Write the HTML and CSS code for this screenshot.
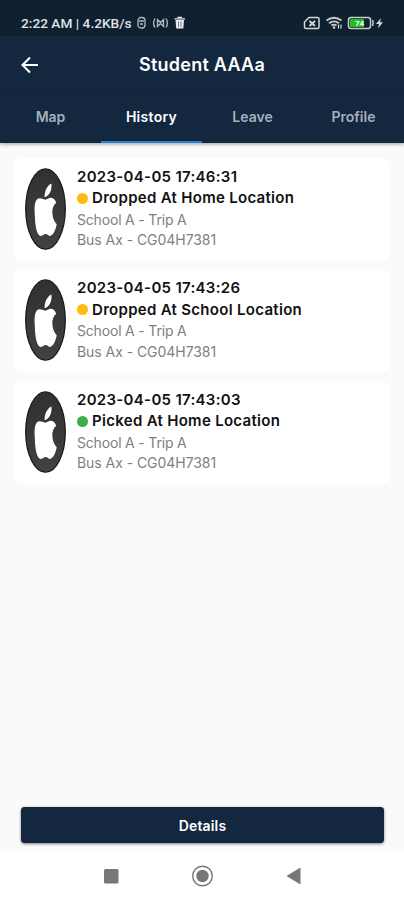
FILE: index.html
```html
<!DOCTYPE html>
<html lang="en">
<head>
  <meta charset="UTF-8" />
  <meta name="viewport" content="width=device-width, initial-scale=1" />
  <title>Student AAAa</title>
  <link rel="stylesheet" href="styles.css">
</head>
<body>
  <svg width="0" height="0" class="defs">
    <defs>
      <linearGradient id="dark" x1="0" y1="0" x2="0" y2="1">
        <stop offset="0" stop-color="#303032" />
        <stop offset="1" stop-color="#424244" />
      </linearGradient>
      <symbol id="avatar" viewBox="0 0 42 84">
        <ellipse cx="21" cy="42" rx="20.3" ry="41.2" fill="url(#dark)" stroke="#151515" stroke-width="1.2" />
        <path fill="#fff" d="M27 16C23 18 20 23 20 30C25 29 28 22.5 27 16Z" />
        <path fill="#fff" d="M20.800 32.500C18 31.500 15 30 13 31.500C10 34 9.500 39 10 47C10.300 56 11 65 14.500 69C17 71 19 67.500 21.200 67.500C23.400 67.500 25 71 27 69C30 67 31.500 62 32.500 57.500C29.800 55 28 50.500 28 45.500C28 40.500 29.300 38 32 35.500C30 30.500 26.500 30 24.500 31Z" />
      </symbol>
    </defs>
  </svg>

  <div class="status-bar">
    <span class="status-text">2:22 AM | 4.2KB/s</span>
    <svg class="status-left" width="48" height="14" viewBox="0 0 48 14" fill="none" stroke="#b5bac0" stroke-width="1.300">
      <rect x="1" y="1.500" width="7" height="10.500" rx="3" />
      <path d="M2 5H7M3 8H6" />
      <path d="M18 2.500C16.500 5 16.500 9 18 11.500M20.500 3.500V10.500L23.500 7.500L26.500 10.500V3.500L23.500 6.500ZM29 2.500C30.500 5 30.500 9 29 11.500" />
      <path d="M38.500 4H47L46.300 12.500H39.200Z" fill="#e8eaec" stroke="none" />
      <path d="M37.500 2.800H48M40.500 1.300H45" stroke="#e8eaec" />
      <path d="M41.500 5.500V11M44 5.500V11" stroke="#556270" stroke-width=".8" />
    </svg>
    <svg class="status-right" width="82" height="16" viewBox="0 0 82 16" fill="none">
      <path d="M6 2.500H14.500Q16 2.500 16 4V12Q16 13.500 14.500 13.500H3Q1.500 13.500 1.500 12V7Z" stroke="#d4d7da" stroke-width="1.500" />
      <path d="M6.500 6L12 11M12 6L6.500 11" stroke="#d4d7da" stroke-width="1.800" />
      <path d="M23.500 5.500Q31 0 38.500 5.500M26 8.200Q31 4.500 36 8.200M28.500 10.600Q31 8.800 33.500 10.600" stroke="#c8ccd0" stroke-width="1.800" />
      <circle cx="31" cy="12.500" r="1.300" fill="#c8ccd0" />
      <path d="M35.500 9.500V13.500M38 9.500V13.500" stroke="#dfe2e5" stroke-width="1.200" />
      <rect x="45.500" y="2.500" width="22" height="11" rx="2.500" stroke="#c8ccd0" stroke-width="1.500" />
      <path d="M69.500 5Q71 8 69.500 11" stroke="#c8ccd0" stroke-width="1.500" />
      <rect x="47" y="4" width="14" height="8" rx="1" fill="#1fc01c" />
      <text x="52" y="11" class="battery">74</text>
      <path d="M78 3L73 9H76L75 13.500L80 7.300H77Z" fill="#d4d7da" />
    </svg>
  </div>

  <header class="app-bar">
    <svg class="back" width="18" height="18" viewBox="0 0 18 18" fill="none" stroke="#fff" stroke-width="2.100">
      <path d="M17 9H2M9 1.500L1.500 9L9 16.500" />
    </svg>
    <h1>Student AAAa</h1>
  </header>
  <nav class="tabs">
    <a class="tab">Map</a>
    <a class="tab active">History</a>
    <a class="tab">Leave</a>
    <a class="tab">Profile</a>
  </nav>

  <main>
    <div class="card">
      <svg class="avatar"><use href="#avatar" /></svg>
      <div class="info">
        <div class="date">2023-04-05 17:46:31</div>
        <div class="event"><i class="dot"></i><span>Dropped At Home Location</span></div>
        <div class="trip">School A - Trip A</div>
        <div class="bus">Bus Ax - CG04H7381</div>
      </div>
    </div>
    <div class="card">
      <svg class="avatar"><use href="#avatar" /></svg>
      <div class="info">
        <div class="date">2023-04-05 17:43:26</div>
        <div class="event"><i class="dot"></i><span>Dropped At School Location</span></div>
        <div class="trip">School A - Trip A</div>
        <div class="bus">Bus Ax - CG04H7381</div>
      </div>
    </div>
    <div class="card">
      <svg class="avatar"><use href="#avatar" /></svg>
      <div class="info">
        <div class="date">2023-04-05 17:43:03</div>
        <div class="event"><i class="dot picked"></i><span>Picked At Home Location</span></div>
        <div class="trip">School A - Trip A</div>
        <div class="bus">Bus Ax - CG04H7381</div>
      </div>
    </div>
  </main>

  <button class="details">Details</button>

  <div class="nav-bar">
    <svg width="404" height="48" viewBox="0 0 404 48">
      <rect x="104" y="17" width="14.500" height="14.500" rx="1.500" fill="#777" />
      <circle cx="202.500" cy="24" r="9.800" fill="none" stroke="#777" stroke-width="1.400" />
      <circle cx="202.500" cy="24" r="6.200" fill="#777" />
      <path d="M286.500 24L300.500 15.500V32.500Z" fill="#777" />
    </svg>
  </div>
</body>
</html>
```
FILE: styles.css
```css
* {
  box-sizing: border-box;
}
body {
  margin: 0;
  height: 900px;
  display: flex;
  flex-direction: column;
  overflow: hidden;
  background: #fafafa;
  font-family: Inter, Roboto, sans-serif;
}
.defs {
  position: absolute;
}
.status-bar {
  height: 36px;
  padding: 10px 19px 0 21px;
  display: flex;
  align-items: center;
  background: #0f2031;
}
.status-text {
  font: 500 13.7px Roboto, sans-serif;
  color: #dfe2e5;
  white-space: nowrap;
  width: 116px;
}
.status-right {
  margin-left: auto;
}
.battery {
  font: 700 8px Roboto, sans-serif;
  fill: #fff;
}
.app-bar {
  height: 56px;
  padding: 1px 21px 0;
  display: grid;
  grid-template-columns: 18px 1fr 18px;
  align-items: center;
  background: #13283f;
}
h1 {
  margin: 0;
  text-align: center;
  color: #fff;
  font-size: 18px;
  font-weight: 600;
  letter-spacing: 0.25px;
  line-height: 24px;
}
.tabs {
  height: 50.5px;
  display: grid;
  grid-template-columns: repeat(4, 1fr);
  background: #13283f;
  box-shadow: 0 1px 4px rgba(0, 0, 0, 0.4);
}
.tab {
  display: flex;
  justify-content: center;
  align-items: center;
  border-bottom: 2.5px solid transparent;
  color: #a5afba;
  font-size: 14px;
  font-weight: 600;
}
.active {
  color: #fff;
  border-color: #2580cf;
  letter-spacing: 0.3px;
}
main {
  flex: 1;
  padding: 15px 14px 0;
  display: flex;
  flex-direction: column;
  gap: 8.5px;
}
.card {
  height: 103px;
  padding: 9px 11px;
  display: flex;
  gap: 11px;
  background: #fff;
  border-radius: 9px;
}
.avatar {
  width: 41px;
  height: 84px;
}
.info {
  color: #7f7f7f;
  font-size: 14px;
  line-height: 20.5px;
  white-space: nowrap;
}
.date,
.event {
  color: #111;
  font-size: 15px;
  font-weight: 600;
  letter-spacing: 0.3px;
}
.event {
  height: 22.5px;
  display: flex;
  align-items: center;
  gap: 4px;
}
.trip {
  letter-spacing: -0.18px;
}
.bus {
  letter-spacing: -0.05px;
}
.dot {
  width: 11px;
  height: 11px;
  border-radius: 50%;
  background: #ffbb0e;
}
.picked {
  background: #3dad48;
}
.details {
  height: 36px;
  margin: 0 20px 9px 21px;
  border: 0;
  border-radius: 4px;
  background: #13283f;
  box-shadow: inset 0 0 1px #020d25, 0 1px 3px rgba(0, 0, 0, 0.5);
  color: #fff;
  font: 600 14px Inter, Roboto, sans-serif;
  letter-spacing: 0.15px;
}
.nav-bar {
  height: 48px;
  background: #fff;
}
.nav-bar svg {
  display: block;
}
```
